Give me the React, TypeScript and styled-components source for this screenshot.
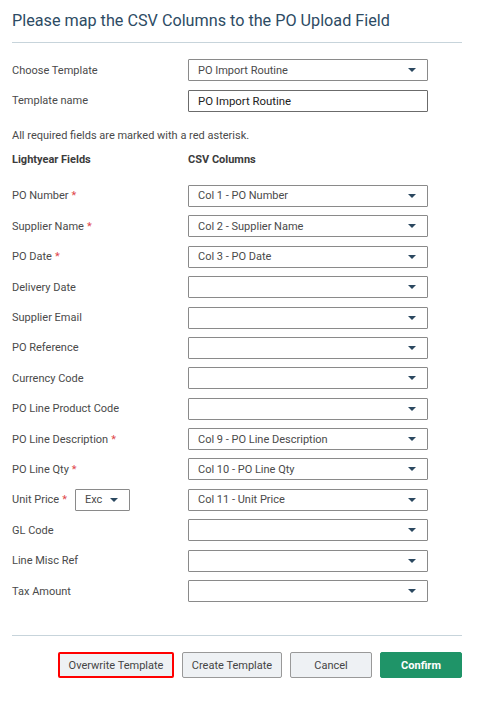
import React from "react";
import styled, { createGlobalStyle } from "styled-components";

const Global = createGlobalStyle`
  html, body { margin: 0; padding: 0; background: #fff; }
  body { font-family: Roboto, "Liberation Sans", Arial, sans-serif; }
`;

const Page = styled.div`
  width: 477px;
  padding: 0 15px 0 12px;
  box-sizing: border-box;
`;

const Title = styled.h1`
  margin: 0;
  padding-top: 10px;
  height: 32px;
  font-size: 16.2px;
  font-weight: 400;
  color: #2d4b64;
  line-height: 21px;
`;

const Divider = styled.hr`
  margin: 0;
  border: none;
  border-top: 1px solid #c7d4db;
`;

const Form = styled.div`
  padding-top: 12px;
  display: flex;
  flex-direction: column;
`;

const Row = styled.div`
  display: grid;
  grid-template-columns: 176px 240px;
  align-items: center;
  height: 30.4px;
`;

const Label = styled.div`
  font-size: 11px;
  color: #4a4a4a;
  display: flex;
  align-items: center;
`;

const Star = styled.span`
  color: #e0474c;
  margin-left: 3px;
`;

const SelectBox = styled.div<{ $w?: string }>`
  position: relative;
  width: ${(p) => p.$w ?? "240px"};
  height: 22px;
  box-sizing: border-box;
  border: 1px solid #8a8a8a;
  border-radius: 1px;
  background: #fff;
  font-size: 11px;
  color: #4a4a4a;
  display: flex;
  align-items: center;
  padding-left: 9px;
`;

const Caret = styled.span`
  position: absolute;
  right: 11px;
  top: 8px;
  width: 0;
  height: 0;
  border-left: 4.5px solid transparent;
  border-right: 4.5px solid transparent;
  border-top: 4.5px solid #2b4860;
`;

const TextInput = styled.div`
  width: 240px;
  height: 22px;
  box-sizing: border-box;
  border: 1px solid #6b6b6b;
  border-radius: 1px;
  font-size: 11.4px;
  color: #222;
  display: flex;
  align-items: center;
  padding-left: 9px;
`;

const Note = styled.div`
  font-size: 11px;
  color: #4a4a4a;
  height: 24px;
  display: flex;
  align-items: center;
  margin-top: 8px;
`;

const Header = styled.div`
  display: grid;
  grid-template-columns: 176px 240px;
  font-size: 11px;
  font-weight: 700;
  color: #3c3c3c;
  height: 24px;
  align-items: center;
  margin-bottom: 9px;
`;

const Footer = styled.div`
  margin-top: 29px;
`;

const Buttons = styled.div`
  display: flex;
  justify-content: flex-end;
  gap: 8px;
  padding-top: 16px;
`;

const Btn = styled.button<{ $primary?: boolean; $focus?: boolean; $w: number }>`
  width: ${(p) => p.$w}px;
  height: 26px;
  box-sizing: border-box;
  font-family: Roboto, "Liberation Sans", Arial, sans-serif;
  font-size: 11px;
  border-radius: 2px;
  cursor: pointer;
  background: ${(p) => (p.$primary ? "#1f9468" : "#eef1f4")};
  color: ${(p) => (p.$primary ? "#fff" : "#444")};
  font-weight: ${(p) => (p.$primary ? 700 : 400)};
  border: ${(p) =>
    p.$primary ? "1px solid #1f9468" : p.$focus ? "2px solid #f00" : "1px solid #999"};
  padding: 0;
`;

const UnitWrap = styled.div`
  display: flex;
  align-items: center;
  gap: 8px;
`;

type F = { label: string; req?: boolean; value?: string; exc?: boolean };

const fields: F[] = [
  { label: "PO Number", req: true, value: "Col 1 - PO Number" },
  { label: "Supplier Name", req: true, value: "Col 2 - Supplier Name" },
  { label: "PO Date", req: true, value: "Col 3 - PO Date" },
  { label: "Delivery Date" },
  { label: "Supplier Email" },
  { label: "PO Reference" },
  { label: "Currency Code" },
  { label: "PO Line Product Code" },
  { label: "PO Line Description", req: true, value: "Col 9 - PO Line Description" },
  { label: "PO Line Qty", req: true, value: "Col 10 - PO Line Qty" },
  { label: "Unit Price", req: true, value: "Col 11 - Unit Price", exc: true },
  { label: "GL Code" },
  { label: "Line Misc Ref" },
  { label: "Tax Amount" },
];

const Select = ({ value, w }: { value?: string; w?: string }) => (
  <SelectBox $w={w}>
    {value}
    <Caret />
  </SelectBox>
);

export default function App() {
  return (
    <Page>
      <Global />
      <Title>Please map the CSV Columns to the PO Upload Field</Title>
      <Divider />
      <Form>
        <Row>
          <Label>Choose Template</Label>
          <Select value="PO Import Routine" />
        </Row>
        <Row>
          <Label>Template name</Label>
          <TextInput>PO Import Routine</TextInput>
        </Row>
        <Note>All required fields are marked with a red asterisk.</Note>
        <Header>
          <div>Lightyear Fields</div>
          <div>CSV Columns</div>
        </Header>
        {fields.map((f) => (
          <Row key={f.label}>
            <Label>
              {f.exc ? (
                <UnitWrap>
                  <span>
                    {f.label}
                    <Star>*</Star>
                  </span>
                  <Select value="Exc" w="55px" />
                </UnitWrap>
              ) : (
                <>
                  {f.label}
                  {f.req && <Star>*</Star>}
                </>
              )}
            </Label>
            <Select value={f.value} />
          </Row>
        ))}
      </Form>
      <Footer>
        <Divider />
        <Buttons>
          <Btn $w={116} $focus>Overwrite Template</Btn>
          <Btn $w={100}>Create Template</Btn>
          <Btn $w={82}>Cancel</Btn>
          <Btn $w={82} $primary>Confirm</Btn>
        </Buttons>
      </Footer>
    </Page>
  );
}
